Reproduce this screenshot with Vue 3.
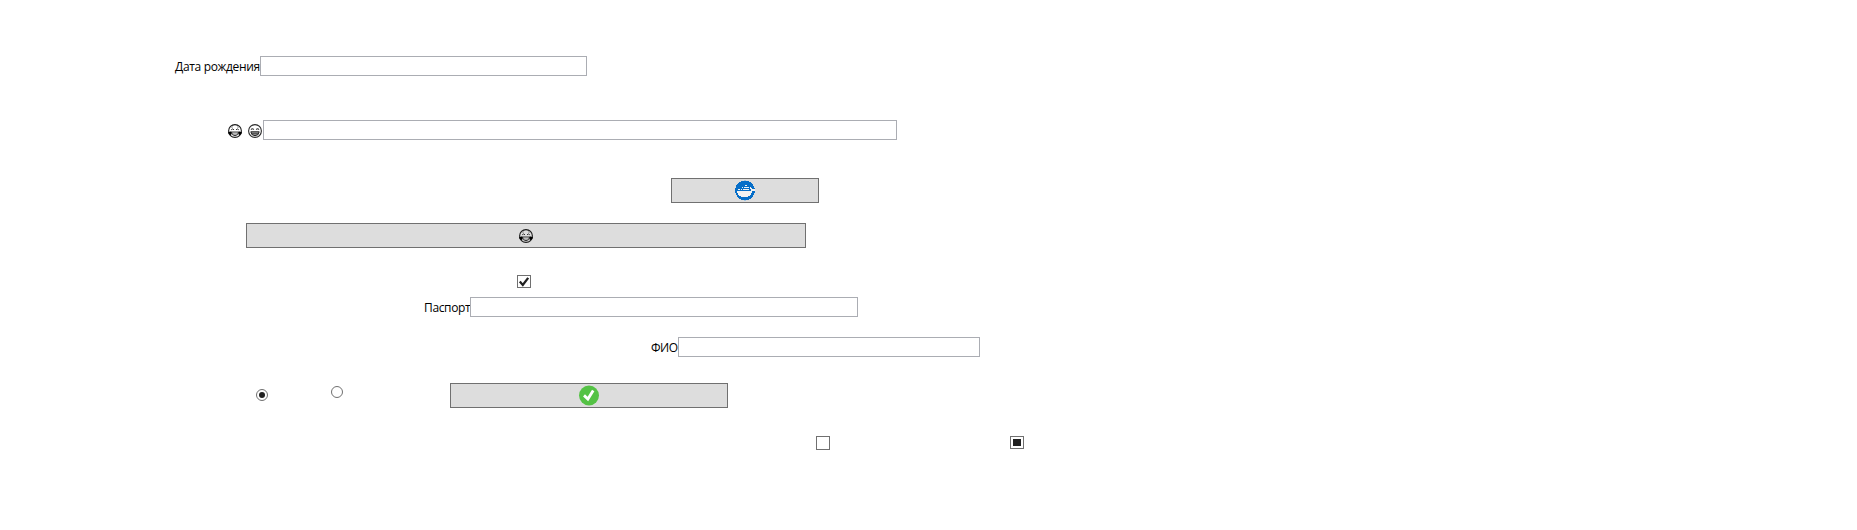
<script setup>
import { ref } from 'vue'

const birthDate = ref('')
const mood = ref('')
const passport = ref('')
const fullName = ref('')
</script>

<template>
  <svg class="defs" aria-hidden="true">
    <symbol id="face-joy" viewBox="0 0 14 14">
      <circle cx="7" cy="7" r="6.4" fill="none" stroke="#1a1a1a" stroke-width="1.1" />
      <path d="M3.2 3.3 5 2.8M9 2.8l1.8.5" fill="none" stroke="#777" stroke-width=".8" />
      <path d="M3.2 5.8 Q4.6 4.1 6 5.8M8 5.8 Q9.4 4.1 10.8 5.8" fill="none" stroke="#333" stroke-width="1" />
      <path d="M3.5 8H10.5Q10.3 11.6 7 11.7Q3.7 11.6 3.5 8Z" fill="#ddd" stroke="#222" stroke-width=".9" />
      <path d="M4.2 10.1H9.8" stroke="#666" stroke-width=".7" />
      <path d="M0 8.2 3.3 7.2Q4.2 9.9 2.8 10.9Q.4 11 0 8.2ZM14 8.2 10.7 7.2Q9.8 9.9 11.2 10.9Q13.6 11 14 8.2Z" fill="#000" />
    </symbol>
    <symbol id="face-grin" viewBox="0 0 14 14">
      <circle cx="7" cy="7" r="6.4" fill="none" stroke="#2a2a2a" stroke-width="1.1" />
      <path d="M3 5.6 Q4.4 4 5.8 5.6M8.2 5.6 Q9.6 4 11 5.6" fill="none" stroke="#333" stroke-width="1.1" />
      <path d="M2.8 7.8H11.2Q10.8 11.6 7 11.7Q3.2 11.6 2.8 7.8Z" fill="#999" stroke="#222" stroke-width="1" />
      <path d="M3.5 9.7H10.5" stroke="#333" stroke-width=".8" />
    </symbol>
  </svg>

  <main class="form">
    <label class="row birth"><span class="label">Дата рождения</span><input v-model="birthDate" class="field" /></label>
    <label class="row mood">
      <span class="faces">
        <svg class="face"><use href="#face-joy" /></svg>
        <svg class="face"><use href="#face-grin" /></svg>
      </span>
      <input v-model="mood" class="field" />
    </label>
    <button class="button ship" aria-label="Docker">
      <svg width="20" height="21" viewBox="0 0 20 21" shape-rendering="crispEdges">
        <circle cx="10" cy="10.5" r="10" fill="#066ec8" />
        <path d="M9 0h2v1H9zM9 20h2v1H9z" fill="#9fc3e2" />
        <path d="M2 11H16V9H15V7H16V8H17V9H20V11H17V13H16V15H15V16H13V17H6V16H4V15H3V13H2Z" fill="#f2f2f2" />
        <path d="M10 5h2v1h-2zM7 7h1v1H7zM9 7h5v1H9zM3 9h2v1H3zM6 9h1v1H6zM8 9h6v1H8z" fill="#f2f2f2" />
        <path d="M2 10h14v1H2z" fill="#066ec8" />
      </svg>
    </button>
    <button class="button laugh" aria-label="Joy">
      <svg class="face"><use href="#face-joy" /></svg>
    </button>
    <span class="box checked" role="checkbox" aria-checked="true">
      <svg width="12" height="11" viewBox="0 0 12 11"><path d="M1.8 5.6 4.8 8.9 10.2 1.9" fill="none" stroke="#212121" stroke-width="2.3" /></svg>
    </span>
    <label class="row passport"><span class="label">Паспорт</span><input v-model="passport" class="field" /></label>
    <label class="row name"><span class="label">ФИО</span><input v-model="fullName" class="field" /></label>
    <div class="row choices">
      <span class="radio selected" role="radio" aria-checked="true"></span>
      <span class="radio other" role="radio" aria-checked="false"></span>
      <button class="button accept" aria-label="OK">
        <svg width="20" height="21" viewBox="0 0 20 21">
          <circle cx="10" cy="10.5" r="10" fill="#54c245" />
          <path d="M5 10.4 8.9 14 14.2 5.6" fill="none" stroke="#fff" stroke-width="2.8" />
        </svg>
      </button>
    </div>
    <div class="row states">
      <span class="box" role="checkbox" aria-checked="false"></span>
      <span class="box mixed" role="checkbox" aria-checked="mixed"><i class="mark"></i></span>
    </div>
  </main>
</template>

<style>
html,
body {
  background: #fff;
  overflow: hidden;
}
</style>

<style scoped>
.defs {
  display: block;
  width: 0;
  height: 0;
}
.form {
  box-sizing: border-box;
  display: flex;
  flex-direction: column;
  align-items: flex-start;
  height: 530px;
  padding-top: 56px;
  color: #000;
  font: 12px/16px "Segoe UI", "Open Sans", "Noto Sans", sans-serif;
}
.row {
  display: flex;
  align-items: flex-start;
}
.label {
  flex: none;
  padding-top: 3px;
  white-space: nowrap;
}
.field {
  box-sizing: border-box;
  height: 20px;
  margin: 0;
  padding: 0 3px;
  border: 1px solid #abadb3;
  border-radius: 0;
  background: #fff;
  outline: none;
  font: inherit;
}
.button {
  box-sizing: border-box;
  display: flex;
  align-items: center;
  justify-content: center;
  height: 25px;
  padding: 0;
  border: 1px solid #707070;
  border-radius: 0;
  background: #ddd;
}
.button svg {
  display: block;
}
.birth { margin-left: 175px; }
.birth .label { width: 85px; letter-spacing: -0.33px; }
.birth .field { width: 327px; }
.mood { margin: 44px 0 0 228px; }
.mood .field { width: 634px; }
.faces {
  display: flex;
  gap: 6px;
  width: 35px;
  padding-top: 4px;
}
.face {
  flex: none;
  width: 14px;
  height: 14px;
}
.ship {
  width: 148px;
  margin: 38px 0 0 671px;
}
.laugh {
  width: 560px;
  margin: 20px 0 0 246px;
}
.box {
  box-sizing: border-box;
  display: flex;
  width: 14px;
  height: 14px;
  border: 1px solid #707070;
  background: #fff;
}
.checked {
  height: 13px;
  margin: 27px 0 0 517px;
}
.passport { margin: 9px 0 0 424px; }
.passport .label { width: 46px; letter-spacing: -0.35px; }
.passport .field { width: 388px; }
.name { margin: 20px 0 0 651px; }
.name .label { width: 27px; letter-spacing: -0.5px; }
.name .field { width: 302px; }
.choices { margin: 26px 0 0 256px; }
.radio {
  box-sizing: border-box;
  display: flex;
  align-items: center;
  justify-content: center;
  width: 12px;
  height: 12px;
  border: 1px solid #707070;
  border-radius: 50%;
}
.selected { margin-top: 6px; }
.selected::after {
  width: 6px;
  height: 6px;
  border-radius: 50%;
  background: #212121;
  content: "";
}
.other { margin: 3px 107px 0 63px; }
.accept { width: 278px; }
.states {
  gap: 180px;
  margin: 28px 0 0 816px;
}
.mixed {
  height: 13px;
  padding: 2px;
}
.mark {
  width: 8px;
  height: 7px;
  background: #212121;
}
</style>
